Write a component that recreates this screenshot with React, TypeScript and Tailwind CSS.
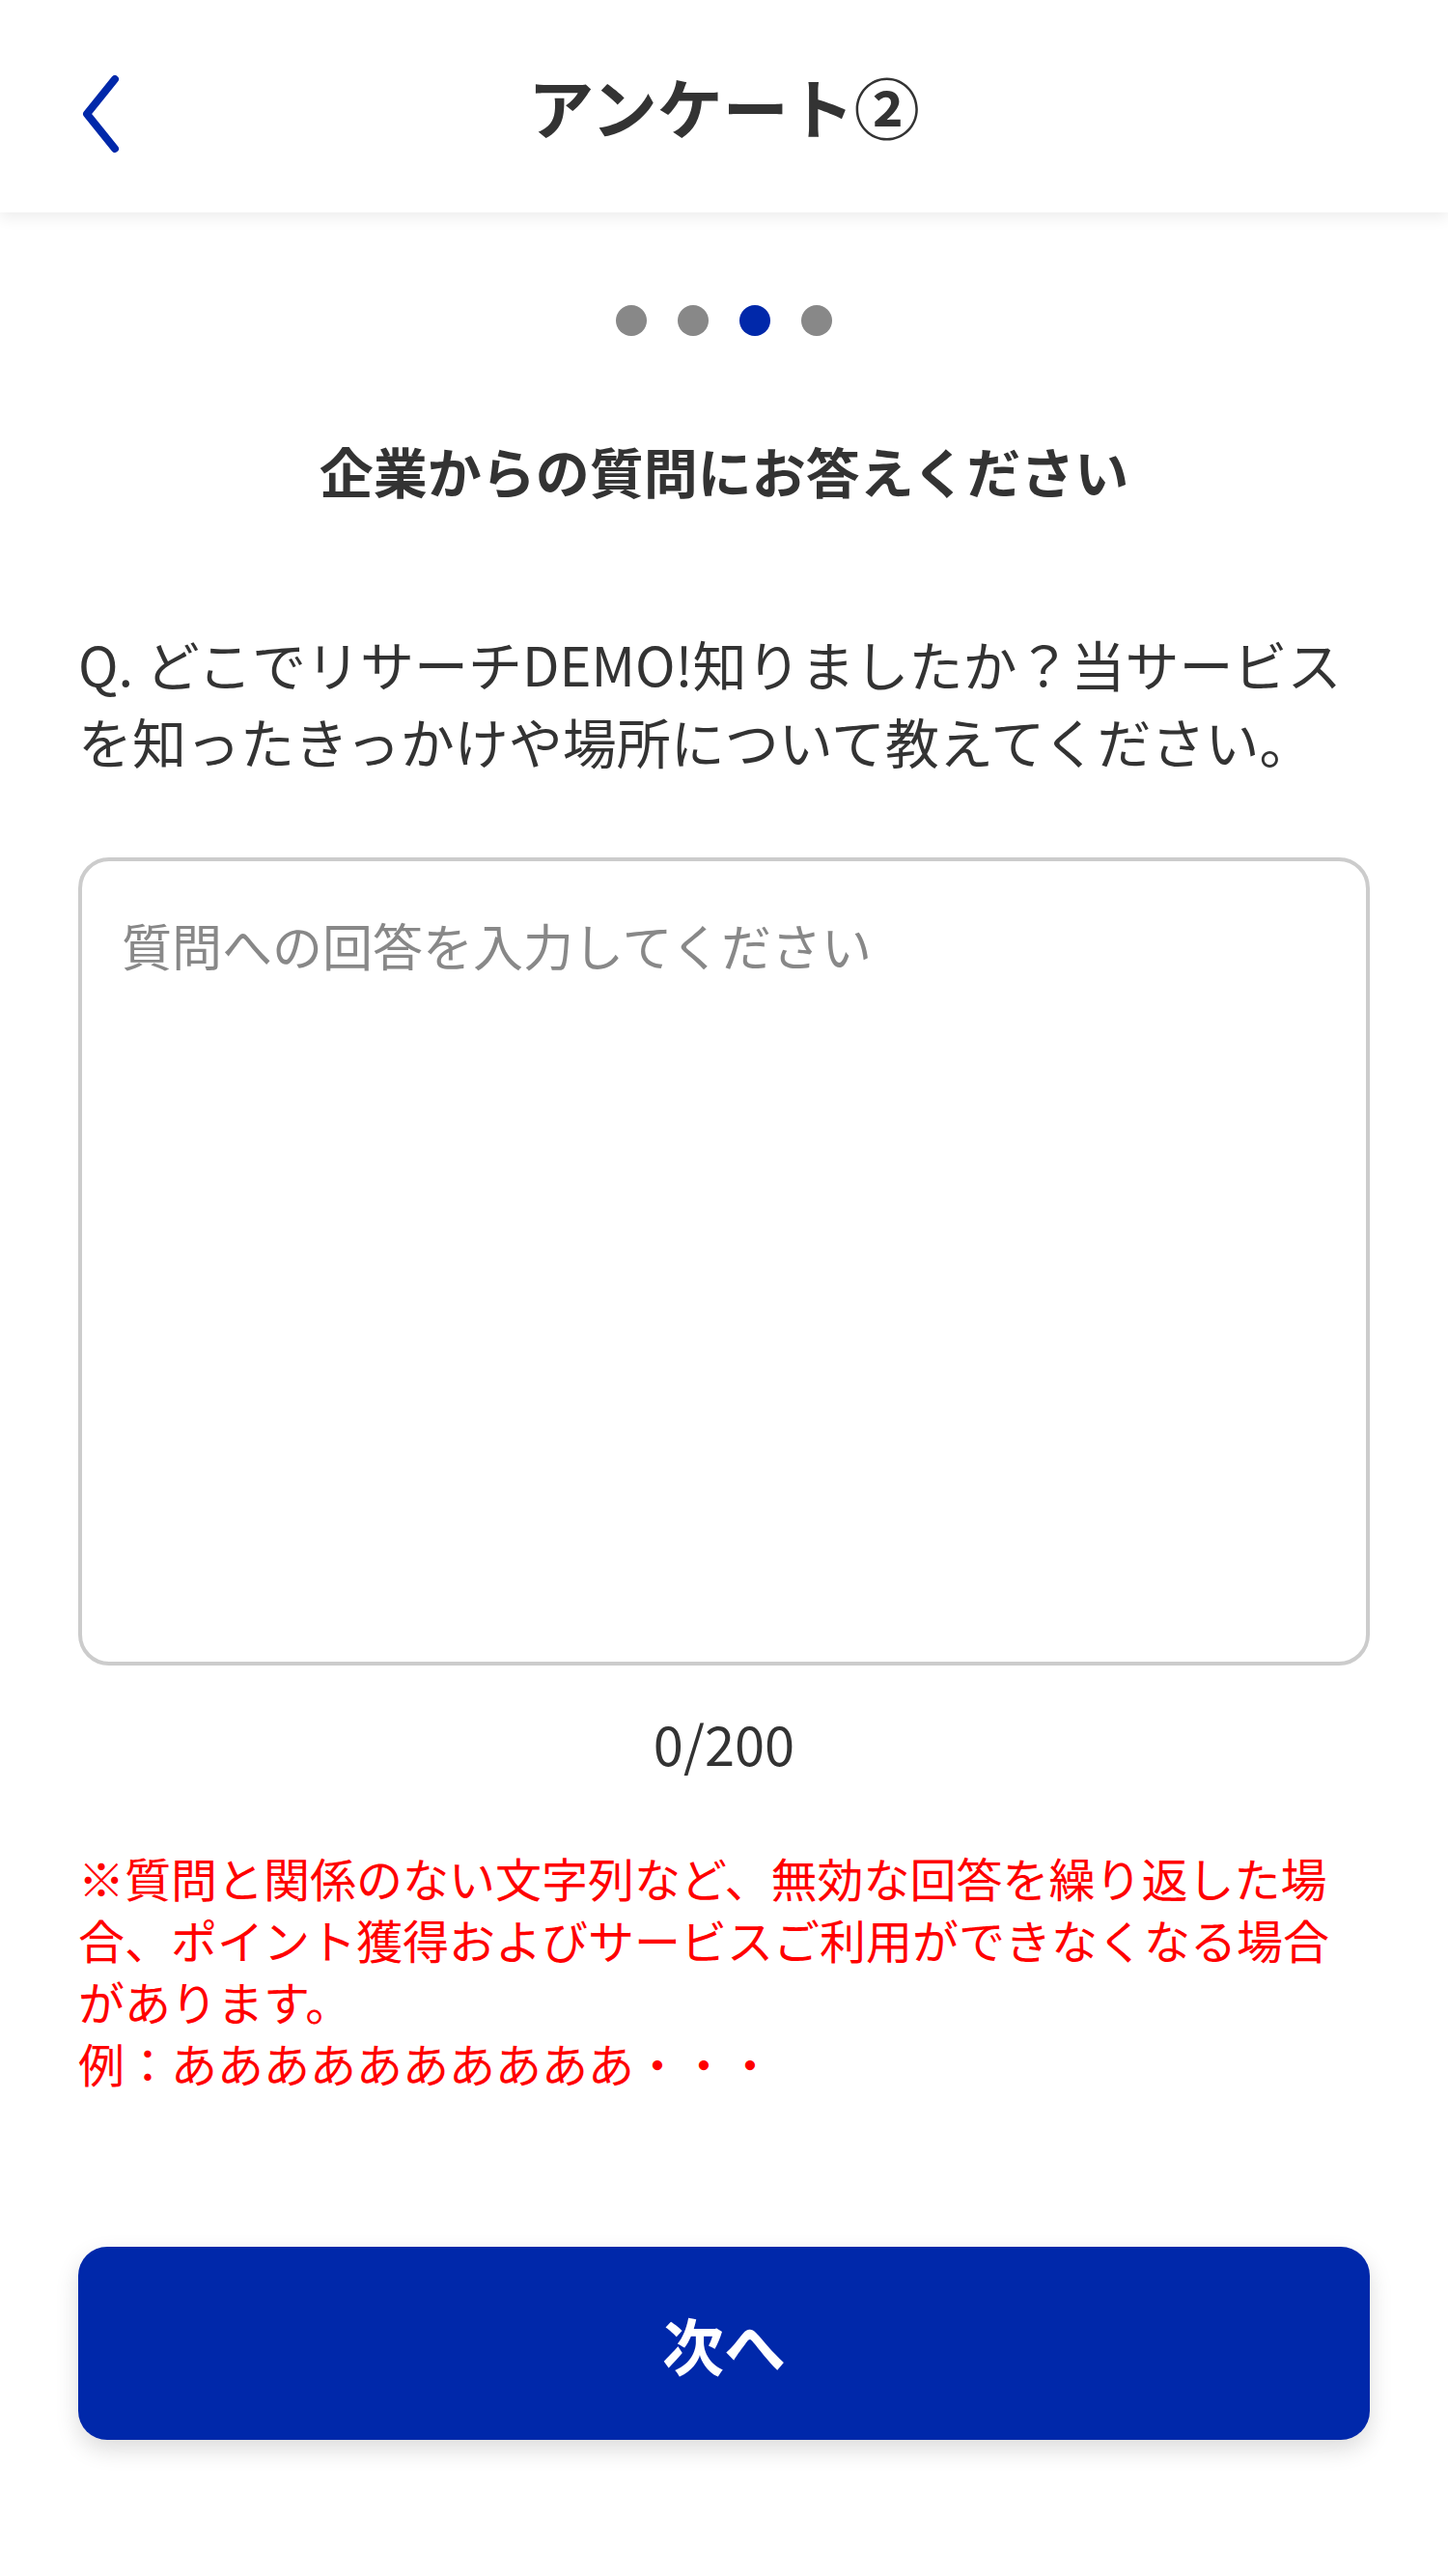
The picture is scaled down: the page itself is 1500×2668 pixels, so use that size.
import React from "react";

const font = {fontFamily: '"Noto Sans CJK JP", "Noto Sans", sans-serif'};

const dots = [false, false, true, false];

const Header = () => (
  <header className="relative flex h-[220px] items-center justify-center bg-white shadow-[0_6px_14px_rgba(0,0,0,0.07)]">
    <button className="absolute left-[74px] top-[68px] p-[4px]" aria-label="戻る">
      <svg width="52" height="92" viewBox="0 0 52 92" fill="none">
        <path d="M41 10 L12 46 L41 82" stroke="#0028aa" strokeWidth="8" strokeLinecap="round" strokeLinejoin="round" />
      </svg>
    </button>
    <h1 className="text-[68px] leading-none font-bold text-[#333333]">アンケート②</h1>
  </header>
);

export default function App() {
  return (
    <div className="min-h-[2668px] w-[1500px] bg-white" style={font}>
      <Header />

      <div className="mt-[96px] flex justify-center gap-[32px]">
        {dots.map((active, i) => (
          <span
            key={i}
            className={active ? "h-[32px] w-[32px] rounded-full bg-[#0028aa]" : "h-[32px] w-[32px] rounded-full bg-[#888888]"}
          />
        ))}
      </div>

      <h2 className="mt-[99px] text-center text-[56px] leading-[80px] font-bold text-[#333333]">
        企業からの質問にお答えください
      </h2>

      <div className="px-[81px]">
        <p className="mt-[120px] text-[56px] leading-[80px] text-[#333333]">
          Q. どこでリサーチDEMO!知りましたか？当サービスを知ったきっかけや場所について教えてください。
        </p>

        <textarea
          className="mt-[81px] block h-[837px] w-full resize-none rounded-[32px] border-4 border-[#cccccc] bg-white pt-[48px] pr-[40px] pl-[41px] text-[52px] leading-[78px] text-[#333333] outline-none placeholder:text-[#888888]"
          placeholder="質問への回答を入力してください"
          style={font}
        />

        <p className="mt-[40px] text-center text-[56px] leading-[80px] text-[#333333]">0/200</p>

        <p className="mt-[67px] text-[48px] leading-[64px] text-[#ff0000]">
          ※質問と関係のない文字列など、無効な回答を繰り返した場合、ポイント獲得およびサービスご利用ができなくなる場合があります。
          <br />
          例：ああああああああああ・・・
        </p>

        <button className="mt-[159px] flex h-[200px] w-full items-center justify-center rounded-[30px] bg-[#0028aa] text-[64px] font-bold text-white shadow-[0_10px_24px_rgba(0,0,0,0.14)]">
          次へ
        </button>
      </div>
    </div>
  );
}
